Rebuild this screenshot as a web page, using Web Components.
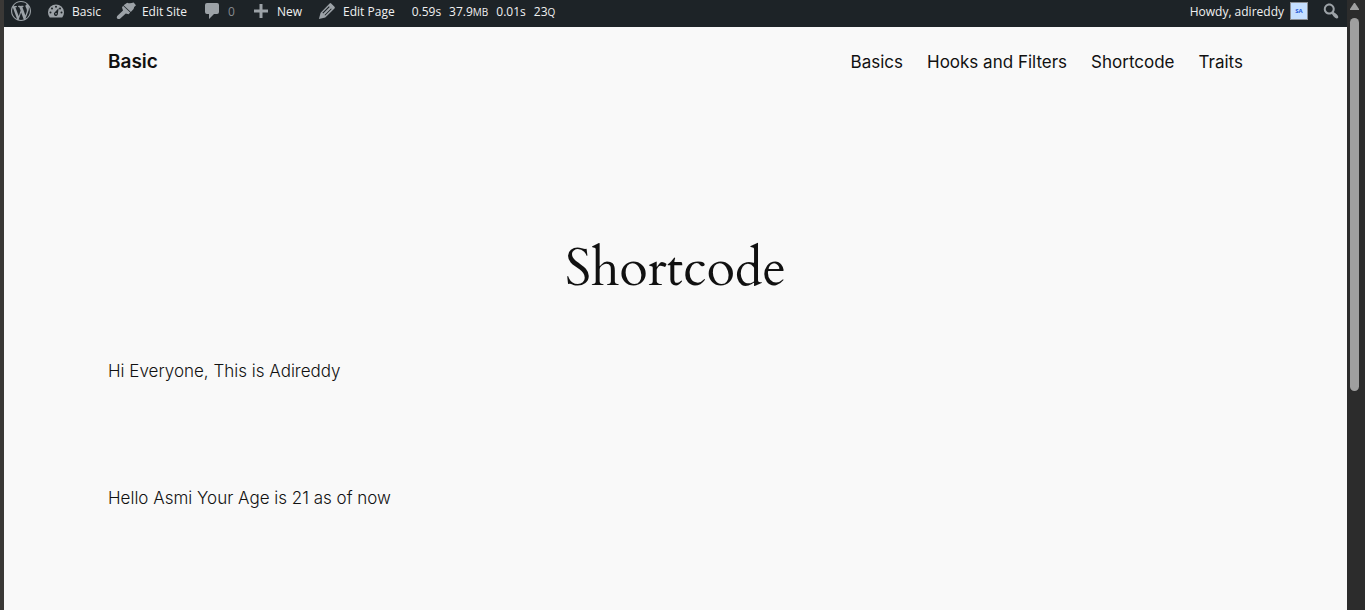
<!DOCTYPE html>
<html lang="en">
<head>
<meta charset="utf-8">
<title>Shortcode – Basic</title>
<style>
html, body { height: 100%; }
body { margin: 0; background: #f9f9f9; color: #111; font-family: Inter, sans-serif; }
</style>
</head>
<body>
<site-window>
  <admin-bar slot="bar">
    <bar-item icon="wordpress" label="About WordPress"></bar-item>
    <bar-item icon="dashboard">Basic</bar-item>
    <bar-item icon="brush">Edit Site</bar-item>
    <bar-item icon="comment" muted>0</bar-item>
    <bar-item icon="plus">New</bar-item>
    <bar-item icon="pencil">Edit Page</bar-item>
    <query-stats></query-stats>
    <user-badge slot="end" initials="SA">Howdy, adireddy</user-badge>
    <bar-item slot="end" icon="search" label="Search"></bar-item>
  </admin-bar>
  <site-header>Basic</site-header>
  <site-page heading="Shortcode">
    <p>Hi Everyone, This is Adireddy</p>
    <p>Hello Asmi Your Age is 21 as of now</p>
  </site-page>
</site-window>

<script>
const define = (name, css, html, setup) => customElements.define(name, class extends HTMLElement {
  constructor() {
    super();
    const root = this.attachShadow({ mode: 'open' });
    root.innerHTML = `<style>${css}</style>${html}`;
    if (setup) setup(this, root);
  }
});

const icons = {
  wordpress: '<path d="M20 10c0-5.51-4.49-10-10-10C4.48 0 0 4.49 0 10c0 5.52 4.48 10 10 10 5.51 0 10-4.48 10-10zM7.78 15.37L4.37 6.22c.55-.02 1.17-.08 1.17-.08.5-.06.44-1.13-.06-1.11 0 0-1.45.11-2.37.11-.18 0-.37 0-.58-.01C4.12 2.69 6.87 1.11 10 1.11c2.33 0 4.45.87 6.05 2.34-.68-.11-1.65.39-1.65 1.58 0 .74.45 1.36.9 2.1.35.61.55 1.36.55 2.46 0 1.49-1.4 5-1.4 5l-3.03-8.37c.54-.02.82-.17.82-.17.5-.05.44-1.25-.06-1.22 0 0-1.44.12-2.38.12-.87 0-2.33-.12-2.33-.12-.5-.03-.56 1.2-.06 1.22l.92.08 1.26 3.41zM17.41 10c.24-.64.74-1.87.43-4.25.7 1.29 1.05 2.71 1.05 4.25 0 3.29-1.73 6.24-4.4 7.78.97-2.59 1.94-5.2 2.92-7.78zM6.1 18.09C3.12 16.65 1.11 13.53 1.11 10c0-1.3.23-2.48.72-3.59C3.25 10.3 4.67 14.2 6.1 18.09zm4.03-6.63l2.58 6.98c-.86.29-1.76.45-2.71.45-.79 0-1.57-.11-2.29-.33.81-2.38 1.62-4.74 2.42-7.1z"/>',
  dashboard: '<path d="M3.8 16.5h12.4a8 8 0 1 0-12.4 0z"/><g fill="#1d2327"><circle cx="10" cy="5.8" r="1"/><circle cx="6" cy="7.6" r="1"/><circle cx="14" cy="7.6" r="1"/><circle cx="4.5" cy="11.5" r="1"/><circle cx="15.5" cy="11.5" r="1"/><path d="M12.6 7.2l-.7 5.6a2 2 0 1 1-3.1-1.5z"/></g><circle cx="10" cy="12.8" r=".8"/>',
  brush: '<path d="M7.6 4.2L11.2 1.8Q14 3 17.6 1.6L20 4.2Q17.6 5.6 17.6 8L14.8 11zM7 4.8L14.2 11.600L12.600 13.200L9.800 12.600L4 17.800Q2.200 18.600 1.200 17.400Q.2 16.200 1.200 15L7 9.600L6 6.600z"/>',
  comment: '<path d="M5 2h10q2 0 2 2v7q0 2-2 2h-3l-5 5v-5H5q-2 0-2-2V4q0-2 2-2z"/>',
  plus: '<path d="M17 8.500v3h-5.500V17h-3v-5.500H3v-3h5.500V3h3v5.500z"/>',
  pencil: '<path fill-rule="evenodd" d="M14.200 2.500l3.300 3.300q.8.8 0 1.600L8.300 16.400l-6.400 1.700 1.700-6.400L12.600 2.500q.8-.8 1.600 0zM11.900 5.300l-6.500 6.500.8.800 6.500-6.500zM14 7.400l-6.500 6.500.7.700 6.500-6.500z"/>',
  search: '<path d="M12.14 4.18c1.87 1.87 2.11 4.75.72 6.89.12.1.22.21.36.31.2.16.47.36.81.59.34.24.56.39.66.47.42.31.73.57.94.78.32.32.6.65.84 1 .25.35.44.69.59 1.04.14.35.21.68.18 1-.02.32-.14.59-.36.81s-.49.34-.81.36c-.31.02-.65-.04-.99-.19-.35-.14-.7-.34-1.04-.59-.35-.24-.68-.52-1-.84-.21-.21-.47-.52-.77-.93-.1-.13-.25-.35-.47-.66-.22-.32-.4-.57-.56-.78-.16-.2-.29-.35-.44-.5-2.07 1.09-4.69.76-6.44-.98-2.14-2.15-2.14-5.64 0-7.78 2.15-2.15 5.63-2.15 7.78 0zm-1.41 6.36c1.36-1.37 1.36-3.58 0-4.95-1.37-1.37-3.59-1.37-4.95 0-1.37 1.37-1.37 3.58 0 4.95 1.36 1.37 3.58 1.37 4.95 0z"/>'
};

define('bar-item', `
  :host { display: block; }
  a { display: flex; align-items: center; gap: 6px; color: inherit; text-decoration: none; white-space: nowrap; }
  svg { width: 20px; height: 20px; fill: #9ca2a7; flex: none; }
  span { padding-top: 2px; line-height: 20px; }
  :host([muted]) span { color: #858a8e; min-width: 8px; }
`, `<a href="#"><svg viewBox="0 0 20 20" aria-hidden="true"></svg></a>`, (host, root) => {
  const link = root.querySelector('a');
  root.querySelector('svg').innerHTML = icons[host.getAttribute('icon')];
  if (host.hasAttribute('label')) {
    link.setAttribute('aria-label', host.getAttribute('label'));
  } else {
    const text = document.createElement('span');
    text.append(document.createElement('slot'));
    link.append(text);
  }
});

define('query-stats', `
  :host { display: block; padding: 2px 0 0 2px; }
  a { display: flex; gap: 8px; align-items: baseline; color: inherit; text-decoration: none; white-space: nowrap; line-height: 20px; }
  small { font-size: 10px; }
`, `<a href="#"><span>0.59s</span><span>37.9<small>MB</small></span><span>0.01s</span><span>23<small>Q</small></span></a>`);

define('user-badge', `
  :host { display: block; }
  a { display: flex; align-items: center; gap: 6px; color: inherit; text-decoration: none; white-space: nowrap; }
  span { padding-top: 2px; line-height: 20px; }
  b { box-sizing: border-box; width: 18px; height: 18px; border: 1px solid #8c8f94; background: #c5dfff; color: #2457d6; font-size: 6px; line-height: 16px; text-align: center; }
`, `<a href="#"><span><slot></slot></span><b></b></a>`, (host, root) => {
  root.querySelector('b').textContent = host.getAttribute('initials');
});

define('admin-bar', `
  :host { display: block; background: #1d2327; color: #f0f0f1; font: 12px/22px "Open Sans", sans-serif; }
  nav, div { display: flex; align-items: center; }
  nav { justify-content: space-between; height: 22px; padding: 0 6px 5px 7px; }
  div { gap: 15px; }
  .end { gap: 13px; }
`, `<nav aria-label="Toolbar"><div><slot></slot></div><div class="end"><slot name="end"></slot></div></nav>`);

define('site-header', `
  :host { display: block; padding: 20px 104px; }
  header { display: flex; justify-content: space-between; align-items: center; line-height: 30px; }
  a { color: #111; text-decoration: none; }
  .title { font-size: 19px; font-weight: 600; }
  nav { display: flex; gap: 24px; font-size: 17px; font-weight: 400; }
`, `<header><a class="title" href="#"><slot></slot></a><nav aria-label="Main"><a href="#">Basics</a><a href="#">Hooks and Filters</a><a href="#">Shortcode</a><a href="#">Traits</a></nav></header>`);

define('site-page', `
  :host { display: block; padding: 139px 104px 60px; }
  h1 { margin: 0 0 56px; font: 400 52px/66px Cardo, "Liberation Serif", serif; text-align: center; }
  ::slotted(p) { margin: 0 0 101px; font-size: 17px; font-weight: 300; line-height: 26px; }
`, `<main><h1></h1><slot></slot></main>`, (host, root) => {
  root.querySelector('h1').textContent = host.getAttribute('heading');
});

define('scroll-track', `
  :host { display: flex; flex-direction: column; align-items: center; gap: 8px; box-sizing: border-box; padding: 3px 6px 0 3px; background: #2c2c2c; }
  svg { width: 9px; height: 7px; fill: #9f9f9f; flex: none; }
  div { width: 9px; height: 61.5%; border-radius: 5px; background: #9f9f9f; }
`, `<svg viewBox="0 0 9 7" aria-hidden="true"><path d="M4 0h1l4 6v1H0V6z"/></svg><div></div>`);

define('site-window', `
  :host { display: grid; grid-template-columns: 4px 1fr 18px; height: 100vh; overflow: hidden; background: #3a3836; }
  .view { grid-column: 2; background: #f9f9f9; overflow: hidden; min-height: 0; }
`, `<div class="view"><slot name="bar"></slot><slot></slot></div><scroll-track></scroll-track>`);
</script>
</body>
</html>
